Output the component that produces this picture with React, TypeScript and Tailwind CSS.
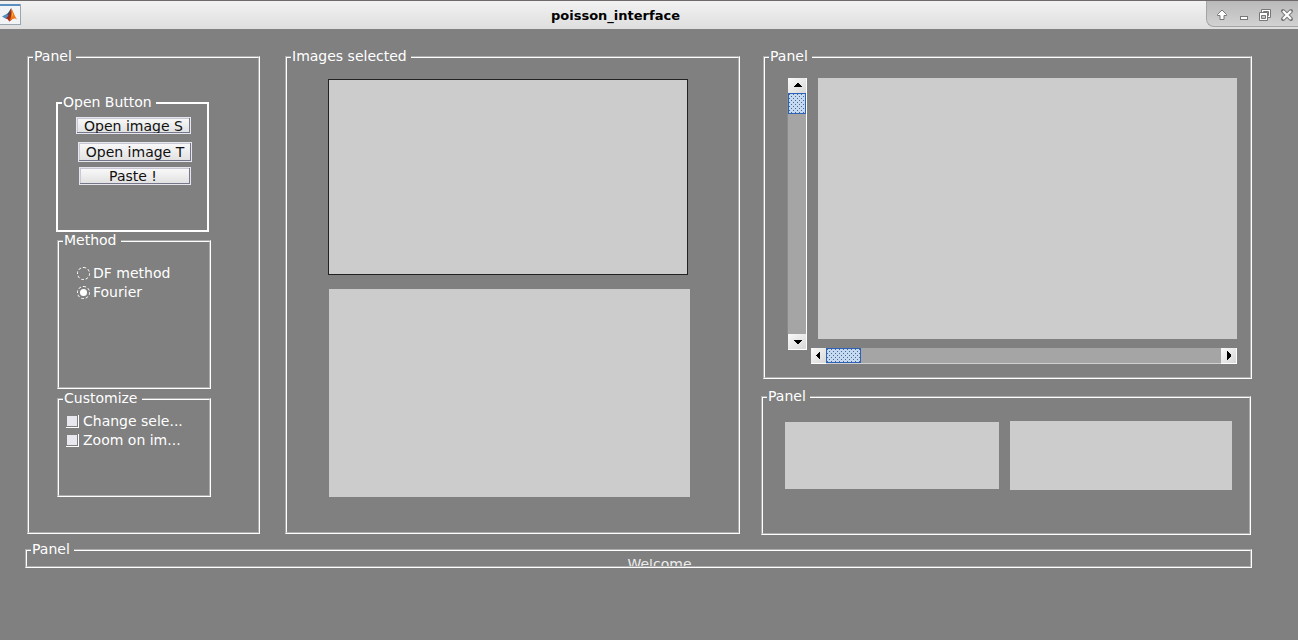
import { useState } from "react";
import type { ReactNode } from "react";

function Panel({
  title,
  className = "",
  bodyClass = "",
  solid = false,
  children,
}: {
  title: string;
  className?: string;
  bodyClass?: string;
  solid?: boolean;
  children: ReactNode;
}) {
  return (
    <fieldset
      className={`min-w-0 border-2 border-white ${solid ? "" : "[border-style:groove]"} ${className}`}
    >
      <legend className="ml-1 pr-1 pb-0.5 pl-px leading-4">{title}</legend>
      <div className={bodyClass}>{children}</div>
    </fieldset>
  );
}

function PushButton({ className, children }: { className: string; children: ReactNode }) {
  return (
    <button
      type="button"
      className={`flex items-center justify-center overflow-hidden border border-[#e6e6ee] bg-linear-to-b from-[#fafafa] to-[#e0e0e0] leading-4 text-[#111] shadow-[inset_-1px_-1px_0_#77778c,inset_1px_1px_0_#c8c8d4] ${className}`}
    >
      {children}
    </button>
  );
}

function Axes({ className }: { className: string }) {
  return <div className={`bg-[#cccccc] ${className}`} />;
}

function ArrowButton({ label, points, className }: { label: string; points: string; className: string }) {
  return (
    <button
      type="button"
      aria-label={label}
      className={`flex shrink-0 items-center justify-center border-white bg-linear-to-br from-[#fafafa] to-[#d8d8d8] ${className}`}
    >
      <svg width="9" height="9" viewBox="0 0 9 9" shapeRendering="crispEdges">
        <polygon points={points} fill="#000" />
      </svg>
    </button>
  );
}

const thumbFrame =
  "[&::-webkit-slider-thumb]:appearance-none [&::-webkit-slider-thumb]:border [&::-webkit-slider-thumb]:border-[#2f62b5] [&::-webkit-slider-thumb]:bg-[#c5d9f0]";

const thumbDots =
  "[&::-webkit-slider-thumb]:bg-[radial-gradient(circle_at_0.5px_0.5px,#4a6894_0.5px,transparent_0.6px),radial-gradient(circle_at_2.5px_2.5px,#4a6894_0.5px,transparent_0.6px)] [&::-webkit-slider-thumb]:bg-size-[4px_4px]";

function MatlabIcon() {
  return (
    <svg width="21" height="21" viewBox="0 0 21 21" aria-hidden="true">
      <rect width="21" height="21" fill="#9aa5b0" />
      <rect width="20" height="20" fill="#f1f4f7" />
      <rect width="20" height="2" fill="#5b8fc0" />
      <path d="M2 12.5 6.5 10 8.8 12 5.8 14.8Z" fill="#4d8cbc" />
      <path d="M6.5 10C8.5 9.6 9.4 6.3 11.2 4.2L10.2 10.5 8.2 14 5.8 14.8 8.6 12Z" fill="#2c4f74" />
      <path d="M11.2 4.2C10 8 9.2 12 5.8 14.8 7.2 14.2 8.2 15.2 9.2 17.6 11.2 17 12.2 14.4 13.7 14Z" fill="#a52a14" />
      <path d="M11.2 4.2C12.9 6 14.4 12 17.4 15.8 14.8 13.4 12.7 14.6 9.2 17.6 11.6 13 12 9 11.2 4.2Z" fill="#ee7a1c" />
      <path d="M11.2 4.2C12 7 12.2 10 11.6 13L13 11Z" fill="#f7c04a" />
    </svg>
  );
}

function WindowControls() {
  const style = "flex size-[14px] items-center justify-center";
  const icon = { width: 14, height: 14, viewBox: "0 0 14 14" };
  return (
    <div className="flex h-[26px] w-[92px] items-center justify-between rounded-bl-lg border-b border-l border-[#a4a4a4] bg-linear-to-b from-[#b9b9b9] to-[#d2d2d2] pt-[3px] pr-1 pl-2">
      <button type="button" aria-label="Keep above" className={style}>
        <svg {...icon}>
          <path d="M7 2 11.5 6.5V7.5H9V11.5H5V7.5H2.5V6.5Z" fill="#fff" stroke="#777" strokeLinejoin="round" />
        </svg>
      </button>
      <button type="button" aria-label="Minimize" className={style}>
        <svg {...icon}>
          <rect x="3.5" y="8.5" width="7" height="3" fill="#fff" stroke="#777" />
        </svg>
      </button>
      <button type="button" aria-label="Restore" className={style}>
        <svg {...icon} fill="none">
          <path d="M3.5 1.5h9v8h-9z" fill="#fff" stroke="#777" />
          <path d="M5.5 3.5h5v4h-5z" fill="#c4c4c4" stroke="#777" />
          <path d="M1.5 4.5h8v8h-8z" fill="#fff" stroke="#777" />
          <path d="M3.5 7.5h4v3h-4z" fill="#c4c4c4" stroke="#777" />
        </svg>
      </button>
      <button type="button" aria-label="Close" className={style}>
        <svg {...icon} fill="none">
          <path d="M3 3l8 8M11 3l-8 8" stroke="#777" strokeWidth="4" strokeLinecap="round" />
          <path d="M3 3l8 8M11 3l-8 8" stroke="#fff" strokeWidth="2.2" />
        </svg>
      </button>
    </div>
  );
}

export default function App() {
  const [method, setMethod] = useState("Fourier");

  return (
    <div className="min-h-screen bg-[#808080] font-['DejaVu_Sans',sans-serif] text-[14px] text-white">
      <header className="flex h-[29px] border-t border-[#6e6a6a] bg-linear-to-b from-[#f2f2f2] to-[#dedede]">
        <div className="pt-[3px]">
          <MatlabIcon />
        </div>
        <h1 className="flex-1 pl-1 text-center text-[13px] leading-[29px] font-bold text-black">
          poisson_interface
        </h1>
        <WindowControls />
      </header>

      <main className="pt-[19px] pr-[46px] pb-6 pl-[27px]">
        <div className="grid grid-cols-[233fr_455fr_489fr] gap-x-6">
          <Panel title="Panel" className="mb-px" bodyClass="pt-7 pr-[47px] pb-[34px] pl-[27px]">
            <Panel title="Open Button" solid className="mr-0.5" bodyClass="flex flex-col pt-[5px] pr-[15px] pb-[45px] pl-[18px]">
              <PushButton className="mr-px h-[17px]">Open image S</PushButton>
              <PushButton className="mt-2 ml-0.5 h-5">Open image T</PushButton>
              <PushButton className="mt-[5px] mr-px ml-[3px] h-[18px] pr-1">Paste !</PushButton>
            </Panel>
            <Panel title="Method" className="ml-px" bodyClass="pt-[14px] pb-[85px] pl-[18px]">
              {["DF method", "Fourier"].map((name) => (
                <label key={name} className="flex h-[19px] items-center gap-[3px]">
                  <input
                    type="radio"
                    name="method"
                    checked={method === name}
                    onChange={() => setMethod(name)}
                    className="size-[13px] appearance-none rounded-full border border-dashed border-white checked:bg-white checked:bg-clip-content checked:p-0.5"
                  />
                  {name}
                </label>
              ))}
            </Panel>
            <Panel title="Customize" className="mt-px ml-px" bodyClass="pt-1 pb-[45px] pl-[7px]">
              {["Change sele...", "Zoom on im..."].map((name) => (
                <label key={name} className="flex h-[19px] items-center gap-1 whitespace-nowrap">
                  <input
                    type="checkbox"
                    className="size-[13px] appearance-none border-r border-b border-white bg-[#e8e8ee] shadow-[inset_-1px_-1px_0_#808080,inset_1px_1px_0_#808080] checked:bg-[#9db8d9]"
                  />
                  {name}
                </label>
              ))}
            </Panel>
          </Panel>

          <Panel title="Images selected" className="-mr-px mb-px ml-px" bodyClass="pt-[13px] pr-12 pb-[34px] pl-[41px]">
            <Axes className="mr-0.5 h-[196px] border border-[#222]" />
            <Axes className="mt-[14px] ml-px h-[208px]" />
          </Panel>

          <div className="flex flex-col gap-[9px]">
            <Panel title="Panel" bodyClass="flex gap-1 pt-3 pr-[13px] pb-[13px] pl-[22px]">
              <div className="flex h-[272px] w-5 flex-col">
                <ArrowButton label="Scroll up" points="0,6 4,2 5,2 9,6" className="ml-px h-[15px] border-r" />
                <input
                  type="range"
                  aria-label="Vertical position"
                  defaultValue={0}
                  className={`min-h-0 w-5 flex-1 appearance-none border-r border-l border-r-white border-l-[#8a8a8a] bg-[#a5a5a5] [writing-mode:vertical-lr] [&::-webkit-slider-thumb]:h-[21px] [&::-webkit-slider-thumb]:w-[18px] ${thumbFrame} ${thumbDots}`}
                />
                <ArrowButton label="Scroll down" points="0,3 9,3 5,7 4,7" className="ml-px h-4 border-r border-b" />
              </div>
              <div className="min-w-0 flex-1">
                <Axes className="ml-[7px] h-[261px]" />
                <div className="mt-[9px] flex h-4">
                  <ArrowButton label="Scroll left" points="6,0 6,9 2,5 2,4" className="w-[15px] border-b" />
                  <input
                    type="range"
                    aria-label="Horizontal position"
                    defaultValue={0}
                    className={`h-4 min-w-0 flex-1 appearance-none border-b border-[#d0d0d0] bg-[#a5a5a5] [&::-webkit-slider-thumb]:h-[15px] [&::-webkit-slider-thumb]:w-[35px] ${thumbFrame} ${thumbDots}`}
                  />
                  <ArrowButton label="Scroll right" points="3,0 7,4 7,5 3,9" className="w-4 border-r border-b" />
                </div>
              </div>
            </Panel>
            <Panel title="Panel" className="mr-px -ml-0.5" bodyClass="grid grid-cols-[214fr_222fr] items-center gap-x-[11px] pt-[15px] pr-[17px] pb-[43px] pl-[22px]">
              <Axes className="h-[67px]" />
              <Axes className="h-[69px]" />
            </Panel>
          </div>
        </div>

        <Panel title="Panel" className="mt-1.5 -ml-0.5">
          <p className="h-[7px] overflow-hidden pl-[42px] text-center leading-[10px] text-[#ececec]">
            Welcome
          </p>
        </Panel>
      </main>
    </div>
  );
}
